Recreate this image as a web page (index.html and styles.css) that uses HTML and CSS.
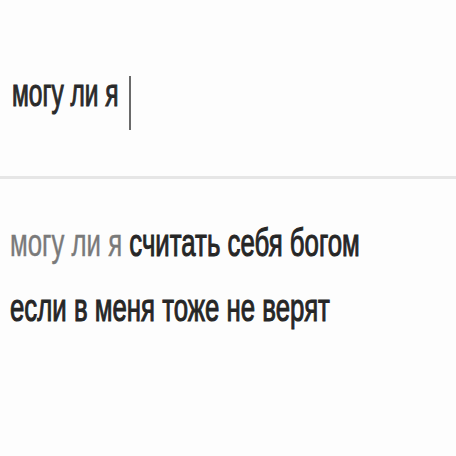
FILE: index.html
```html
<!DOCTYPE html>
<html lang="ru">
<head>
<meta charset="utf-8">
<link rel="stylesheet" href="styles.css">
</head>
<body>
<div class="page">
  <div class="search">
    <span class="query">могу ли я</span>
    <span class="cursor"></span>
  </div>
  <div class="divider"></div>
  <div class="suggestions">
    <div class="line"><span class="typed">могу ли я</span> считать себя богом</div>
    <div class="line">если в меня тоже не верят</div>
  </div>
</div>
</body>
</html>
```
FILE: styles.css
```css
html, body {
  margin: 0;
  padding: 0;
  background: #fdfdfd;
}
.page {
  width: 456px;
  height: 456px;
  font-family: "Liberation Sans", Arial, sans-serif;
  color: #262626;
}
.search {
  height: 176px;
  display: flex;
  align-items: center;
  padding-left: 12px;
}
.query {
  display: inline-block;
  font-size: 24.5px;
  -webkit-text-stroke: 0.7px #2a2a2a;
  transform: scaleY(1.55);
  transform-origin: left center;
  color: #2a2a2a;
  margin-top: 12px;
}
.cursor {
  width: 2px;
  height: 54px;
  background: #6a6a6a;
  margin-left: 10px;
  margin-top: 30px;
}
.divider {
  height: 3px;
  background: #e6e6e6;
}
.suggestions {
  padding: 50px 0 0 10px;
  display: flex;
  flex-direction: column;
  gap: 36px;
}
.line {
  font-size: 25.8px;
  -webkit-text-stroke: 0.7px #262626;
  transform: scaleY(1.48);
  transform-origin: left center;
  white-space: nowrap;
  color: #262626;
}
.typed {
  color: #7a7a7a;
  -webkit-text-stroke: 0.3px #7a7a7a;
}
```
